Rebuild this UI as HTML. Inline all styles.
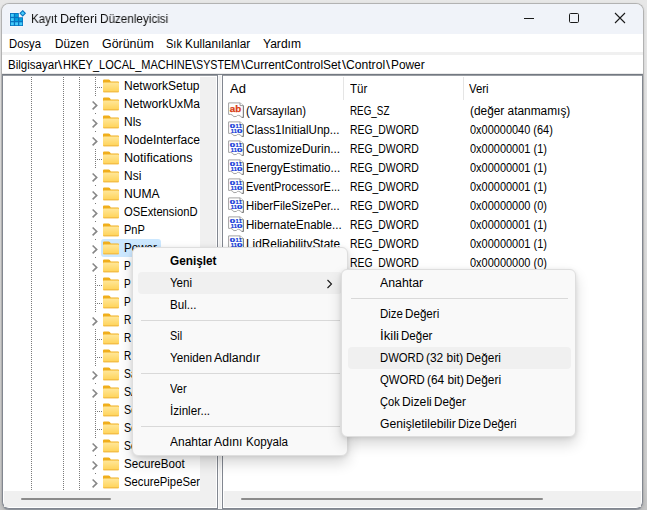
<!DOCTYPE html><html><head><meta charset="utf-8"><title>Kayıt Defteri Düzenleyicisi</title><style>

html,body{margin:0;padding:0;}
body{width:647px;height:510px;overflow:hidden;position:relative;background:#e4e4e4;font-family:"Liberation Sans",sans-serif;font-size:12px;color:#000;}
#shadow{position:absolute;left:0;top:0;width:647px;height:510px;background:linear-gradient(to bottom,#e7e7e7 0,#e6e6e6 40px,#dcdcdc 250px,#cdcdcd 480px,#c4c4c4 510px);}
#win{position:absolute;left:1px;top:3px;width:641px;height:505px;border:1px solid #b2b2b2;border-bottom-color:#8e939a;border-radius:8px;background:linear-gradient(#f0f0f0 0,#f0f0f0 490px,#8a8f98 490px);overflow:hidden;box-shadow:0 1px 3px rgba(0,0,0,.12);}
#in{position:absolute;left:-2px;top:-4px;width:647px;height:510px;}
.abs{position:absolute;}
.t{position:absolute;white-space:nowrap;line-height:14px;height:14px;transform-origin:0 50%;}
.b{font-weight:bold;}
.g{will-change:transform;color:#111;}
#title{left:2px;top:4px;width:641px;height:30px;background:#f0f3f9;}
#menubar{left:2px;top:34px;width:641px;height:18px;background:#fff;}
#addr{left:2px;top:55px;width:641px;height:18px;background:#fff;border-bottom:1px solid #e9e9e9;}
.panel{position:absolute;top:74px;height:435px;background:#fff;border:1px solid #828790;border-top-color:#737981;box-sizing:border-box;}
.panel:after{content:"";position:absolute;left:0;right:0;top:0;height:1px;background:rgba(115,121,129,.72);}
#tree{left:2px;width:216px;border-bottom-left-radius:7px;}
#list{left:222px;width:421px;border-bottom-right-radius:7px;}
.hsb{position:absolute;left:1px;right:1px;bottom:1px;height:16px;background:#f0f0f0;}
#vsb{left:200px;top:77px;width:16px;height:414px;background:#f0f0f0;}
.thumb{height:2px;background:#8b8b8b;border-radius:1px;}
.fd{position:absolute;}
.vd{position:absolute;width:1px;background-image:linear-gradient(to bottom,#7a7a7a 50%,transparent 50%);background-size:1px 2px;}
.hd{position:absolute;height:1px;background-image:linear-gradient(to right,#7a7a7a 50%,transparent 50%);background-size:2px 1px;}
.menu{position:absolute;background:#f9f9f9;border:1px solid #dedede;border-radius:6px;box-sizing:border-box;box-shadow:0 7px 14px rgba(0,0,0,.16),0 1px 4px rgba(0,0,0,.10);}
.hl{position:absolute;background:#f0f0f0;border-radius:4px;}
.sep{position:absolute;height:1px;background:#d9d9d9;}
.colsep{position:absolute;width:1px;background:#e5e5e5;}

</style></head><body><div id="shadow"></div><div id="win"><div id="in">
<div class="abs" id="title"></div><div class="abs" id="menubar"></div><div class="abs" id="addr"></div>
<svg class="abs" style="left:9px;top:9px" width="18" height="18" viewBox="0 0 18 18"><path d="M0.6 3.6H10.2V7.9H14.4V17.4H0.6Z" fill="#fff" opacity=".75"/><path d="M13.7 0.7L17.3 4.3L13.7 7.9L10.1 4.3Z" fill="#fff" opacity=".75"/><path d="M1 4H9.8V8.3H14V17H1Z" fill="#0873bf"/><rect x="1.9" y="4.9" width="2.9" height="2.9" fill="#45ccfb"/><rect x="6.1" y="4.9" width="2.9" height="2.9" fill="#05a2df"/><rect x="1.9" y="9.1" width="2.9" height="2.9" fill="#45ccfb"/><rect x="6.1" y="9.1" width="2.9" height="2.9" fill="#05a2df"/><rect x="10.3" y="9.1" width="2.9" height="2.9" fill="#05a2df"/><rect x="1.9" y="13.3" width="2.9" height="2.9" fill="#45ccfb"/><rect x="6.1" y="13.3" width="2.9" height="2.9" fill="#45ccfb"/><rect x="10.3" y="13.3" width="2.9" height="2.9" fill="#45ccfb"/><path d="M13.7 1.7L16.3 4.3L13.7 6.9L11.1 4.3Z" fill="#45ccfb" stroke="#0873bf" stroke-width="1.1"/></svg>
<svg class="abs" style="left:520px;top:8px" width="115" height="22" viewBox="0 0 115 22" fill="none" stroke="#1a1a1a" stroke-width="1"><path d="M4 10.5H14"/><rect x="49.5" y="5.5" width="9" height="9" rx="1.1"/><path d="M95 5L105 15M105 5L95 15" stroke-width="1.1"/></svg>
<div class="abs" style="left:218px;top:74px;width:4px;height:436px;background:linear-gradient(to right,#fafafa 1px,#f0f0f0 1px,#f0f0f0 3px,#fafafa 3px)"></div><div class="abs" style="left:218px;top:74px;width:4px;height:1px;background:#7f858d"></div><div class="panel" id="tree"><div class="hsb"></div></div><div class="panel" id="list"><div class="hsb"></div></div>
<div class="vd" style="left:31px;top:77px;height:414px"></div>
<div class="vd" style="left:63px;top:77px;height:414px"></div>
<div class="vd" style="left:79px;top:77px;height:414px"></div>
<div class="vd" style="left:95px;top:77px;height:414px"></div>
<div class="hd" style="left:97px;top:87px;width:6px"></div>
<svg class="fd" style="left:103px;top:78.5px" width="16" height="14" viewBox="0 0 16 14"><defs><linearGradient id="fg0" x1="0" y1="0" x2="0" y2="1"><stop offset="0" stop-color="#ffe79a"/><stop offset="1" stop-color="#ffd255"/></linearGradient></defs><path d="M0 1.5Q0 0.5 1 0.5H5.6Q6.3 0.5 6.8 1.1L7.8 2.6H15Q16 2.6 16 3.6V12Q16 13 15 13H1Q0 13 0 12Z" fill="#f0ae1c"/><path d="M0 4.3Q0 3.5 0.8 3.5H15.2Q16 3.5 16 4.3V12.3Q16 13.3 15 13.3H1Q0 13.3 0 12.3Z" fill="url(#fg0)"/><rect x="0.3" y="12.5" width="15.4" height="0.8" rx="0.4" fill="#e9a935"/></svg>
<div class="abs" style="left:91px;top:96px;width:9px;height:17px;background:#fff"></div>
<svg class="abs" style="left:91px;top:100px" width="8" height="11" viewBox="0 0 8 11"><path d="M1.6 1.5L5.7 5.4L1.6 9.3" fill="none" stroke="#878787" stroke-width="1.6"/></svg>
<svg class="fd" style="left:103px;top:96.5px" width="16" height="14" viewBox="0 0 16 14"><defs><linearGradient id="fg1" x1="0" y1="0" x2="0" y2="1"><stop offset="0" stop-color="#ffe79a"/><stop offset="1" stop-color="#ffd255"/></linearGradient></defs><path d="M0 1.5Q0 0.5 1 0.5H5.6Q6.3 0.5 6.8 1.1L7.8 2.6H15Q16 2.6 16 3.6V12Q16 13 15 13H1Q0 13 0 12Z" fill="#f0ae1c"/><path d="M0 4.3Q0 3.5 0.8 3.5H15.2Q16 3.5 16 4.3V12.3Q16 13.3 15 13.3H1Q0 13.3 0 12.3Z" fill="url(#fg1)"/><rect x="0.3" y="12.5" width="15.4" height="0.8" rx="0.4" fill="#e9a935"/></svg>
<div class="abs" style="left:91px;top:114px;width:9px;height:17px;background:#fff"></div>
<svg class="abs" style="left:91px;top:118px" width="8" height="11" viewBox="0 0 8 11"><path d="M1.6 1.5L5.7 5.4L1.6 9.3" fill="none" stroke="#878787" stroke-width="1.6"/></svg>
<svg class="fd" style="left:103px;top:114.5px" width="16" height="14" viewBox="0 0 16 14"><defs><linearGradient id="fg2" x1="0" y1="0" x2="0" y2="1"><stop offset="0" stop-color="#ffe79a"/><stop offset="1" stop-color="#ffd255"/></linearGradient></defs><path d="M0 1.5Q0 0.5 1 0.5H5.6Q6.3 0.5 6.8 1.1L7.8 2.6H15Q16 2.6 16 3.6V12Q16 13 15 13H1Q0 13 0 12Z" fill="#f0ae1c"/><path d="M0 4.3Q0 3.5 0.8 3.5H15.2Q16 3.5 16 4.3V12.3Q16 13.3 15 13.3H1Q0 13.3 0 12.3Z" fill="url(#fg2)"/><rect x="0.3" y="12.5" width="15.4" height="0.8" rx="0.4" fill="#e9a935"/></svg>
<div class="abs" style="left:91px;top:132px;width:9px;height:17px;background:#fff"></div>
<svg class="abs" style="left:91px;top:136px" width="8" height="11" viewBox="0 0 8 11"><path d="M1.6 1.5L5.7 5.4L1.6 9.3" fill="none" stroke="#878787" stroke-width="1.6"/></svg>
<svg class="fd" style="left:103px;top:132.5px" width="16" height="14" viewBox="0 0 16 14"><defs><linearGradient id="fg3" x1="0" y1="0" x2="0" y2="1"><stop offset="0" stop-color="#ffe79a"/><stop offset="1" stop-color="#ffd255"/></linearGradient></defs><path d="M0 1.5Q0 0.5 1 0.5H5.6Q6.3 0.5 6.8 1.1L7.8 2.6H15Q16 2.6 16 3.6V12Q16 13 15 13H1Q0 13 0 12Z" fill="#f0ae1c"/><path d="M0 4.3Q0 3.5 0.8 3.5H15.2Q16 3.5 16 4.3V12.3Q16 13.3 15 13.3H1Q0 13.3 0 12.3Z" fill="url(#fg3)"/><rect x="0.3" y="12.5" width="15.4" height="0.8" rx="0.4" fill="#e9a935"/></svg>
<div class="hd" style="left:97px;top:159px;width:6px"></div>
<svg class="fd" style="left:103px;top:150.5px" width="16" height="14" viewBox="0 0 16 14"><defs><linearGradient id="fg4" x1="0" y1="0" x2="0" y2="1"><stop offset="0" stop-color="#ffe79a"/><stop offset="1" stop-color="#ffd255"/></linearGradient></defs><path d="M0 1.5Q0 0.5 1 0.5H5.6Q6.3 0.5 6.8 1.1L7.8 2.6H15Q16 2.6 16 3.6V12Q16 13 15 13H1Q0 13 0 12Z" fill="#f0ae1c"/><path d="M0 4.3Q0 3.5 0.8 3.5H15.2Q16 3.5 16 4.3V12.3Q16 13.3 15 13.3H1Q0 13.3 0 12.3Z" fill="url(#fg4)"/><rect x="0.3" y="12.5" width="15.4" height="0.8" rx="0.4" fill="#e9a935"/></svg>
<div class="abs" style="left:91px;top:168px;width:9px;height:17px;background:#fff"></div>
<svg class="abs" style="left:91px;top:172px" width="8" height="11" viewBox="0 0 8 11"><path d="M1.6 1.5L5.7 5.4L1.6 9.3" fill="none" stroke="#878787" stroke-width="1.6"/></svg>
<svg class="fd" style="left:103px;top:168.5px" width="16" height="14" viewBox="0 0 16 14"><defs><linearGradient id="fg5" x1="0" y1="0" x2="0" y2="1"><stop offset="0" stop-color="#ffe79a"/><stop offset="1" stop-color="#ffd255"/></linearGradient></defs><path d="M0 1.5Q0 0.5 1 0.5H5.6Q6.3 0.5 6.8 1.1L7.8 2.6H15Q16 2.6 16 3.6V12Q16 13 15 13H1Q0 13 0 12Z" fill="#f0ae1c"/><path d="M0 4.3Q0 3.5 0.8 3.5H15.2Q16 3.5 16 4.3V12.3Q16 13.3 15 13.3H1Q0 13.3 0 12.3Z" fill="url(#fg5)"/><rect x="0.3" y="12.5" width="15.4" height="0.8" rx="0.4" fill="#e9a935"/></svg>
<div class="abs" style="left:91px;top:186px;width:9px;height:17px;background:#fff"></div>
<svg class="abs" style="left:91px;top:190px" width="8" height="11" viewBox="0 0 8 11"><path d="M1.6 1.5L5.7 5.4L1.6 9.3" fill="none" stroke="#878787" stroke-width="1.6"/></svg>
<svg class="fd" style="left:103px;top:186.5px" width="16" height="14" viewBox="0 0 16 14"><defs><linearGradient id="fg6" x1="0" y1="0" x2="0" y2="1"><stop offset="0" stop-color="#ffe79a"/><stop offset="1" stop-color="#ffd255"/></linearGradient></defs><path d="M0 1.5Q0 0.5 1 0.5H5.6Q6.3 0.5 6.8 1.1L7.8 2.6H15Q16 2.6 16 3.6V12Q16 13 15 13H1Q0 13 0 12Z" fill="#f0ae1c"/><path d="M0 4.3Q0 3.5 0.8 3.5H15.2Q16 3.5 16 4.3V12.3Q16 13.3 15 13.3H1Q0 13.3 0 12.3Z" fill="url(#fg6)"/><rect x="0.3" y="12.5" width="15.4" height="0.8" rx="0.4" fill="#e9a935"/></svg>
<div class="abs" style="left:91px;top:204px;width:9px;height:17px;background:#fff"></div>
<svg class="abs" style="left:91px;top:208px" width="8" height="11" viewBox="0 0 8 11"><path d="M1.6 1.5L5.7 5.4L1.6 9.3" fill="none" stroke="#878787" stroke-width="1.6"/></svg>
<svg class="fd" style="left:103px;top:204.5px" width="16" height="14" viewBox="0 0 16 14"><defs><linearGradient id="fg7" x1="0" y1="0" x2="0" y2="1"><stop offset="0" stop-color="#ffe79a"/><stop offset="1" stop-color="#ffd255"/></linearGradient></defs><path d="M0 1.5Q0 0.5 1 0.5H5.6Q6.3 0.5 6.8 1.1L7.8 2.6H15Q16 2.6 16 3.6V12Q16 13 15 13H1Q0 13 0 12Z" fill="#f0ae1c"/><path d="M0 4.3Q0 3.5 0.8 3.5H15.2Q16 3.5 16 4.3V12.3Q16 13.3 15 13.3H1Q0 13.3 0 12.3Z" fill="url(#fg7)"/><rect x="0.3" y="12.5" width="15.4" height="0.8" rx="0.4" fill="#e9a935"/></svg>
<div class="abs" style="left:91px;top:222px;width:9px;height:17px;background:#fff"></div>
<svg class="abs" style="left:91px;top:226px" width="8" height="11" viewBox="0 0 8 11"><path d="M1.6 1.5L5.7 5.4L1.6 9.3" fill="none" stroke="#878787" stroke-width="1.6"/></svg>
<svg class="fd" style="left:103px;top:222.5px" width="16" height="14" viewBox="0 0 16 14"><defs><linearGradient id="fg8" x1="0" y1="0" x2="0" y2="1"><stop offset="0" stop-color="#ffe79a"/><stop offset="1" stop-color="#ffd255"/></linearGradient></defs><path d="M0 1.5Q0 0.5 1 0.5H5.6Q6.3 0.5 6.8 1.1L7.8 2.6H15Q16 2.6 16 3.6V12Q16 13 15 13H1Q0 13 0 12Z" fill="#f0ae1c"/><path d="M0 4.3Q0 3.5 0.8 3.5H15.2Q16 3.5 16 4.3V12.3Q16 13.3 15 13.3H1Q0 13.3 0 12.3Z" fill="url(#fg8)"/><rect x="0.3" y="12.5" width="15.4" height="0.8" rx="0.4" fill="#e9a935"/></svg>
<div class="abs" style="left:101px;top:239px;width:60px;height:18px;background:#cce8ff;border-radius:3px"></div>
<div class="abs" style="left:91px;top:240px;width:9px;height:17px;background:#fff"></div>
<svg class="abs" style="left:91px;top:244px" width="8" height="11" viewBox="0 0 8 11"><path d="M1.6 1.5L5.7 5.4L1.6 9.3" fill="none" stroke="#878787" stroke-width="1.6"/></svg>
<svg class="fd" style="left:103px;top:240.5px" width="16" height="14" viewBox="0 0 16 14"><defs><linearGradient id="fg9" x1="0" y1="0" x2="0" y2="1"><stop offset="0" stop-color="#ffe79a"/><stop offset="1" stop-color="#ffd255"/></linearGradient></defs><path d="M0 1.5Q0 0.5 1 0.5H5.6Q6.3 0.5 6.8 1.1L7.8 2.6H15Q16 2.6 16 3.6V12Q16 13 15 13H1Q0 13 0 12Z" fill="#f0ae1c"/><path d="M0 4.3Q0 3.5 0.8 3.5H15.2Q16 3.5 16 4.3V12.3Q16 13.3 15 13.3H1Q0 13.3 0 12.3Z" fill="url(#fg9)"/><rect x="0.3" y="12.5" width="15.4" height="0.8" rx="0.4" fill="#e9a935"/></svg>
<div class="abs" style="left:91px;top:258px;width:9px;height:17px;background:#fff"></div>
<svg class="abs" style="left:91px;top:262px" width="8" height="11" viewBox="0 0 8 11"><path d="M1.6 1.5L5.7 5.4L1.6 9.3" fill="none" stroke="#878787" stroke-width="1.6"/></svg>
<svg class="fd" style="left:103px;top:258.5px" width="16" height="14" viewBox="0 0 16 14"><defs><linearGradient id="fg10" x1="0" y1="0" x2="0" y2="1"><stop offset="0" stop-color="#ffe79a"/><stop offset="1" stop-color="#ffd255"/></linearGradient></defs><path d="M0 1.5Q0 0.5 1 0.5H5.6Q6.3 0.5 6.8 1.1L7.8 2.6H15Q16 2.6 16 3.6V12Q16 13 15 13H1Q0 13 0 12Z" fill="#f0ae1c"/><path d="M0 4.3Q0 3.5 0.8 3.5H15.2Q16 3.5 16 4.3V12.3Q16 13.3 15 13.3H1Q0 13.3 0 12.3Z" fill="url(#fg10)"/><rect x="0.3" y="12.5" width="15.4" height="0.8" rx="0.4" fill="#e9a935"/></svg>
<div class="hd" style="left:97px;top:285px;width:6px"></div>
<svg class="fd" style="left:103px;top:276.5px" width="16" height="14" viewBox="0 0 16 14"><defs><linearGradient id="fg11" x1="0" y1="0" x2="0" y2="1"><stop offset="0" stop-color="#ffe79a"/><stop offset="1" stop-color="#ffd255"/></linearGradient></defs><path d="M0 1.5Q0 0.5 1 0.5H5.6Q6.3 0.5 6.8 1.1L7.8 2.6H15Q16 2.6 16 3.6V12Q16 13 15 13H1Q0 13 0 12Z" fill="#f0ae1c"/><path d="M0 4.3Q0 3.5 0.8 3.5H15.2Q16 3.5 16 4.3V12.3Q16 13.3 15 13.3H1Q0 13.3 0 12.3Z" fill="url(#fg11)"/><rect x="0.3" y="12.5" width="15.4" height="0.8" rx="0.4" fill="#e9a935"/></svg>
<div class="hd" style="left:97px;top:303px;width:6px"></div>
<svg class="fd" style="left:103px;top:294.5px" width="16" height="14" viewBox="0 0 16 14"><defs><linearGradient id="fg12" x1="0" y1="0" x2="0" y2="1"><stop offset="0" stop-color="#ffe79a"/><stop offset="1" stop-color="#ffd255"/></linearGradient></defs><path d="M0 1.5Q0 0.5 1 0.5H5.6Q6.3 0.5 6.8 1.1L7.8 2.6H15Q16 2.6 16 3.6V12Q16 13 15 13H1Q0 13 0 12Z" fill="#f0ae1c"/><path d="M0 4.3Q0 3.5 0.8 3.5H15.2Q16 3.5 16 4.3V12.3Q16 13.3 15 13.3H1Q0 13.3 0 12.3Z" fill="url(#fg12)"/><rect x="0.3" y="12.5" width="15.4" height="0.8" rx="0.4" fill="#e9a935"/></svg>
<div class="abs" style="left:91px;top:312px;width:9px;height:17px;background:#fff"></div>
<svg class="abs" style="left:91px;top:316px" width="8" height="11" viewBox="0 0 8 11"><path d="M1.6 1.5L5.7 5.4L1.6 9.3" fill="none" stroke="#878787" stroke-width="1.6"/></svg>
<svg class="fd" style="left:103px;top:312.5px" width="16" height="14" viewBox="0 0 16 14"><defs><linearGradient id="fg13" x1="0" y1="0" x2="0" y2="1"><stop offset="0" stop-color="#ffe79a"/><stop offset="1" stop-color="#ffd255"/></linearGradient></defs><path d="M0 1.5Q0 0.5 1 0.5H5.6Q6.3 0.5 6.8 1.1L7.8 2.6H15Q16 2.6 16 3.6V12Q16 13 15 13H1Q0 13 0 12Z" fill="#f0ae1c"/><path d="M0 4.3Q0 3.5 0.8 3.5H15.2Q16 3.5 16 4.3V12.3Q16 13.3 15 13.3H1Q0 13.3 0 12.3Z" fill="url(#fg13)"/><rect x="0.3" y="12.5" width="15.4" height="0.8" rx="0.4" fill="#e9a935"/></svg>
<div class="hd" style="left:97px;top:339px;width:6px"></div>
<svg class="fd" style="left:103px;top:330.5px" width="16" height="14" viewBox="0 0 16 14"><defs><linearGradient id="fg14" x1="0" y1="0" x2="0" y2="1"><stop offset="0" stop-color="#ffe79a"/><stop offset="1" stop-color="#ffd255"/></linearGradient></defs><path d="M0 1.5Q0 0.5 1 0.5H5.6Q6.3 0.5 6.8 1.1L7.8 2.6H15Q16 2.6 16 3.6V12Q16 13 15 13H1Q0 13 0 12Z" fill="#f0ae1c"/><path d="M0 4.3Q0 3.5 0.8 3.5H15.2Q16 3.5 16 4.3V12.3Q16 13.3 15 13.3H1Q0 13.3 0 12.3Z" fill="url(#fg14)"/><rect x="0.3" y="12.5" width="15.4" height="0.8" rx="0.4" fill="#e9a935"/></svg>
<div class="hd" style="left:97px;top:357px;width:6px"></div>
<svg class="fd" style="left:103px;top:348.5px" width="16" height="14" viewBox="0 0 16 14"><defs><linearGradient id="fg15" x1="0" y1="0" x2="0" y2="1"><stop offset="0" stop-color="#ffe79a"/><stop offset="1" stop-color="#ffd255"/></linearGradient></defs><path d="M0 1.5Q0 0.5 1 0.5H5.6Q6.3 0.5 6.8 1.1L7.8 2.6H15Q16 2.6 16 3.6V12Q16 13 15 13H1Q0 13 0 12Z" fill="#f0ae1c"/><path d="M0 4.3Q0 3.5 0.8 3.5H15.2Q16 3.5 16 4.3V12.3Q16 13.3 15 13.3H1Q0 13.3 0 12.3Z" fill="url(#fg15)"/><rect x="0.3" y="12.5" width="15.4" height="0.8" rx="0.4" fill="#e9a935"/></svg>
<div class="abs" style="left:91px;top:366px;width:9px;height:17px;background:#fff"></div>
<svg class="abs" style="left:91px;top:370px" width="8" height="11" viewBox="0 0 8 11"><path d="M1.6 1.5L5.7 5.4L1.6 9.3" fill="none" stroke="#878787" stroke-width="1.6"/></svg>
<svg class="fd" style="left:103px;top:366.5px" width="16" height="14" viewBox="0 0 16 14"><defs><linearGradient id="fg16" x1="0" y1="0" x2="0" y2="1"><stop offset="0" stop-color="#ffe79a"/><stop offset="1" stop-color="#ffd255"/></linearGradient></defs><path d="M0 1.5Q0 0.5 1 0.5H5.6Q6.3 0.5 6.8 1.1L7.8 2.6H15Q16 2.6 16 3.6V12Q16 13 15 13H1Q0 13 0 12Z" fill="#f0ae1c"/><path d="M0 4.3Q0 3.5 0.8 3.5H15.2Q16 3.5 16 4.3V12.3Q16 13.3 15 13.3H1Q0 13.3 0 12.3Z" fill="url(#fg16)"/><rect x="0.3" y="12.5" width="15.4" height="0.8" rx="0.4" fill="#e9a935"/></svg>
<div class="abs" style="left:91px;top:384px;width:9px;height:17px;background:#fff"></div>
<svg class="abs" style="left:91px;top:388px" width="8" height="11" viewBox="0 0 8 11"><path d="M1.6 1.5L5.7 5.4L1.6 9.3" fill="none" stroke="#878787" stroke-width="1.6"/></svg>
<svg class="fd" style="left:103px;top:384.5px" width="16" height="14" viewBox="0 0 16 14"><defs><linearGradient id="fg17" x1="0" y1="0" x2="0" y2="1"><stop offset="0" stop-color="#ffe79a"/><stop offset="1" stop-color="#ffd255"/></linearGradient></defs><path d="M0 1.5Q0 0.5 1 0.5H5.6Q6.3 0.5 6.8 1.1L7.8 2.6H15Q16 2.6 16 3.6V12Q16 13 15 13H1Q0 13 0 12Z" fill="#f0ae1c"/><path d="M0 4.3Q0 3.5 0.8 3.5H15.2Q16 3.5 16 4.3V12.3Q16 13.3 15 13.3H1Q0 13.3 0 12.3Z" fill="url(#fg17)"/><rect x="0.3" y="12.5" width="15.4" height="0.8" rx="0.4" fill="#e9a935"/></svg>
<div class="hd" style="left:97px;top:411px;width:6px"></div>
<svg class="fd" style="left:103px;top:402.5px" width="16" height="14" viewBox="0 0 16 14"><defs><linearGradient id="fg18" x1="0" y1="0" x2="0" y2="1"><stop offset="0" stop-color="#ffe79a"/><stop offset="1" stop-color="#ffd255"/></linearGradient></defs><path d="M0 1.5Q0 0.5 1 0.5H5.6Q6.3 0.5 6.8 1.1L7.8 2.6H15Q16 2.6 16 3.6V12Q16 13 15 13H1Q0 13 0 12Z" fill="#f0ae1c"/><path d="M0 4.3Q0 3.5 0.8 3.5H15.2Q16 3.5 16 4.3V12.3Q16 13.3 15 13.3H1Q0 13.3 0 12.3Z" fill="url(#fg18)"/><rect x="0.3" y="12.5" width="15.4" height="0.8" rx="0.4" fill="#e9a935"/></svg>
<div class="hd" style="left:97px;top:429px;width:6px"></div>
<svg class="fd" style="left:103px;top:420.5px" width="16" height="14" viewBox="0 0 16 14"><defs><linearGradient id="fg19" x1="0" y1="0" x2="0" y2="1"><stop offset="0" stop-color="#ffe79a"/><stop offset="1" stop-color="#ffd255"/></linearGradient></defs><path d="M0 1.5Q0 0.5 1 0.5H5.6Q6.3 0.5 6.8 1.1L7.8 2.6H15Q16 2.6 16 3.6V12Q16 13 15 13H1Q0 13 0 12Z" fill="#f0ae1c"/><path d="M0 4.3Q0 3.5 0.8 3.5H15.2Q16 3.5 16 4.3V12.3Q16 13.3 15 13.3H1Q0 13.3 0 12.3Z" fill="url(#fg19)"/><rect x="0.3" y="12.5" width="15.4" height="0.8" rx="0.4" fill="#e9a935"/></svg>
<div class="abs" style="left:91px;top:438px;width:9px;height:17px;background:#fff"></div>
<svg class="abs" style="left:91px;top:442px" width="8" height="11" viewBox="0 0 8 11"><path d="M1.6 1.5L5.7 5.4L1.6 9.3" fill="none" stroke="#878787" stroke-width="1.6"/></svg>
<svg class="fd" style="left:103px;top:438.5px" width="16" height="14" viewBox="0 0 16 14"><defs><linearGradient id="fg20" x1="0" y1="0" x2="0" y2="1"><stop offset="0" stop-color="#ffe79a"/><stop offset="1" stop-color="#ffd255"/></linearGradient></defs><path d="M0 1.5Q0 0.5 1 0.5H5.6Q6.3 0.5 6.8 1.1L7.8 2.6H15Q16 2.6 16 3.6V12Q16 13 15 13H1Q0 13 0 12Z" fill="#f0ae1c"/><path d="M0 4.3Q0 3.5 0.8 3.5H15.2Q16 3.5 16 4.3V12.3Q16 13.3 15 13.3H1Q0 13.3 0 12.3Z" fill="url(#fg20)"/><rect x="0.3" y="12.5" width="15.4" height="0.8" rx="0.4" fill="#e9a935"/></svg>
<div class="abs" style="left:91px;top:456px;width:9px;height:17px;background:#fff"></div>
<svg class="abs" style="left:91px;top:460px" width="8" height="11" viewBox="0 0 8 11"><path d="M1.6 1.5L5.7 5.4L1.6 9.3" fill="none" stroke="#878787" stroke-width="1.6"/></svg>
<svg class="fd" style="left:103px;top:456.5px" width="16" height="14" viewBox="0 0 16 14"><defs><linearGradient id="fg21" x1="0" y1="0" x2="0" y2="1"><stop offset="0" stop-color="#ffe79a"/><stop offset="1" stop-color="#ffd255"/></linearGradient></defs><path d="M0 1.5Q0 0.5 1 0.5H5.6Q6.3 0.5 6.8 1.1L7.8 2.6H15Q16 2.6 16 3.6V12Q16 13 15 13H1Q0 13 0 12Z" fill="#f0ae1c"/><path d="M0 4.3Q0 3.5 0.8 3.5H15.2Q16 3.5 16 4.3V12.3Q16 13.3 15 13.3H1Q0 13.3 0 12.3Z" fill="url(#fg21)"/><rect x="0.3" y="12.5" width="15.4" height="0.8" rx="0.4" fill="#e9a935"/></svg>
<div class="abs" style="left:91px;top:474px;width:9px;height:17px;background:#fff"></div>
<svg class="abs" style="left:91px;top:478px" width="8" height="11" viewBox="0 0 8 11"><path d="M1.6 1.5L5.7 5.4L1.6 9.3" fill="none" stroke="#878787" stroke-width="1.6"/></svg>
<svg class="fd" style="left:103px;top:474.5px" width="16" height="14" viewBox="0 0 16 14"><defs><linearGradient id="fg22" x1="0" y1="0" x2="0" y2="1"><stop offset="0" stop-color="#ffe79a"/><stop offset="1" stop-color="#ffd255"/></linearGradient></defs><path d="M0 1.5Q0 0.5 1 0.5H5.6Q6.3 0.5 6.8 1.1L7.8 2.6H15Q16 2.6 16 3.6V12Q16 13 15 13H1Q0 13 0 12Z" fill="#f0ae1c"/><path d="M0 4.3Q0 3.5 0.8 3.5H15.2Q16 3.5 16 4.3V12.3Q16 13.3 15 13.3H1Q0 13.3 0 12.3Z" fill="url(#fg22)"/><rect x="0.3" y="12.5" width="15.4" height="0.8" rx="0.4" fill="#e9a935"/></svg>
<span class="t g" id="t0" style="left:30.80px;top:11.70px;transform:scaleX(0.9576);">Kayıt</span>
<span class="t g" id="t1" style="left:60.10px;top:11.70px;transform:scaleX(1.0497);">Defteri</span>
<span class="t g" id="t2" style="left:99.50px;top:11.70px;transform:scaleX(0.9753);">Düzenleyicisi</span>
<span class="t" id="t3" style="left:8.90px;top:37.00px;transform:scaleX(0.9378);">Dosya</span>
<span class="t" id="t4" style="left:54.60px;top:37.00px;transform:scaleX(0.9773);">Düzen</span>
<span class="t" id="t5" style="left:101.50px;top:37.00px;transform:scaleX(1.0354);">Görünüm</span>
<span class="t" id="t6" style="left:166.30px;top:37.00px;transform:scaleX(0.9168);">Sık</span>
<span class="t" id="t7" style="left:185.20px;top:37.00px;transform:scaleX(0.9887);">Kullanılanlar</span>
<span class="t" id="t8" style="left:263.10px;top:37.00px;transform:scaleX(1.0054);">Yardım</span>
<span class="t" id="t9" style="left:7.60px;top:57.80px;transform:scaleX(0.9610);">Bilgisayar</span>
<span class="t" id="t10" style="left:57.99px;top:57.80px;transform:scaleX(1.2000);">\</span>
<span class="t" id="t11" style="left:62.80px;top:57.80px;transform:scaleX(0.9167);">HKEY_LOCAL_MACHINE</span>
<span class="t" id="t12" style="left:192.09px;top:57.80px;transform:scaleX(1.2000);">\</span>
<span class="t" id="t13" style="left:196.10px;top:57.80px;transform:scaleX(0.8917);">SYSTEM</span>
<span class="t" id="t14" style="left:240.79px;top:57.80px;transform:scaleX(1.2000);">\</span>
<span class="t" id="t15" style="left:245.40px;top:57.80px;transform:scaleX(0.9915);">CurrentControlSet</span>
<span class="t" id="t16" style="left:341.74px;top:57.80px;transform:scaleX(1.2000);">\</span>
<span class="t" id="t17" style="left:346.10px;top:57.80px;transform:scaleX(1.0107);">Control</span>
<span class="t" id="t18" style="left:386.09px;top:57.80px;transform:scaleX(1.2000);">\</span>
<span class="t" id="t19" style="left:390.90px;top:57.80px;transform:scaleX(0.9878);">Power</span>
<span class="t" id="t20" style="left:229.60px;top:82.00px;transform:scaleX(1.0826);">Ad</span>
<span class="t" id="t21" style="left:349.90px;top:82.00px;transform:scaleX(0.9611);">Tür</span>
<span class="t" id="t22" style="left:469.40px;top:82.00px;transform:scaleX(0.9474);">Veri</span>
<span class="t" id="t23" style="left:245.90px;top:104.00px;transform:scaleX(0.9389);">(Varsayılan)</span>
<span class="t" id="t24" style="left:349.90px;top:104.00px;transform:scaleX(0.8206);">REG_SZ</span>
<span class="t" id="t25" style="left:470.00px;top:104.00px;transform:scaleX(0.9894);">(değer atanmamış)</span>
<span class="t" id="t26" style="left:245.90px;top:123.00px;transform:scaleX(0.9667);">Class1InitialUnp...</span>
<span class="t" id="t27" style="left:349.90px;top:123.00px;transform:scaleX(0.8671);">REG_DWORD</span>
<span class="t" id="t28" style="left:470.00px;top:123.00px;transform:scaleX(0.9124);">0x00000040 (64)</span>
<span class="t" id="t29" style="left:245.90px;top:142.00px;transform:scaleX(0.9866);">CustomizeDurin...</span>
<span class="t" id="t30" style="left:349.90px;top:142.00px;transform:scaleX(0.8671);">REG_DWORD</span>
<span class="t" id="t31" style="left:470.00px;top:142.00px;transform:scaleX(0.9146);">0x00000001 (1)</span>
<span class="t" id="t32" style="left:245.90px;top:161.00px;transform:scaleX(0.9664);">EnergyEstimatio...</span>
<span class="t" id="t33" style="left:349.90px;top:161.00px;transform:scaleX(0.8671);">REG_DWORD</span>
<span class="t" id="t34" style="left:470.00px;top:161.00px;transform:scaleX(0.9146);">0x00000001 (1)</span>
<span class="t" id="t35" style="left:245.90px;top:180.00px;transform:scaleX(0.9161);">EventProcessorE...</span>
<span class="t" id="t36" style="left:349.90px;top:180.00px;transform:scaleX(0.8671);">REG_DWORD</span>
<span class="t" id="t37" style="left:470.00px;top:180.00px;transform:scaleX(0.9146);">0x00000001 (1)</span>
<span class="t" id="t38" style="left:245.90px;top:199.00px;transform:scaleX(0.9419);">HiberFileSizePer...</span>
<span class="t" id="t39" style="left:349.90px;top:199.00px;transform:scaleX(0.8671);">REG_DWORD</span>
<span class="t" id="t40" style="left:470.00px;top:199.00px;transform:scaleX(0.9146);">0x00000000 (0)</span>
<span class="t" id="t41" style="left:245.90px;top:218.00px;transform:scaleX(0.9617);">HibernateEnable...</span>
<span class="t" id="t42" style="left:349.90px;top:218.00px;transform:scaleX(0.8671);">REG_DWORD</span>
<span class="t" id="t43" style="left:470.00px;top:218.00px;transform:scaleX(0.9146);">0x00000001 (1)</span>
<span class="t" id="t44" style="left:245.90px;top:237.00px;transform:scaleX(0.9865);">LidReliabilityState</span>
<span class="t" id="t45" style="left:349.90px;top:237.00px;transform:scaleX(0.8671);">REG_DWORD</span>
<span class="t" id="t46" style="left:470.00px;top:237.00px;transform:scaleX(0.9146);">0x00000001 (1)</span>
<span class="t" id="t47" style="left:349.90px;top:256.00px;transform:scaleX(0.8671);">REG_DWORD</span>
<span class="t" id="t48" style="left:470.00px;top:256.00px;transform:scaleX(0.9146);">0x00000000 (0)</span>
<span class="t" id="t49" style="left:123.80px;top:79.00px;transform:scaleX(1.0017);">NetworkSetup</span>
<span class="t" id="t50" style="left:123.80px;top:97.00px;transform:scaleX(1.0085);">NetworkUxMa</span>
<span class="t" id="t51" style="left:123.80px;top:115.00px;transform:scaleX(0.9975);">Nls</span>
<span class="t" id="t52" style="left:123.80px;top:133.00px;transform:scaleX(1.0081);">NodeInterface</span>
<span class="t" id="t53" style="left:123.80px;top:151.00px;transform:scaleX(1.0493);">Notifications</span>
<span class="t" id="t54" style="left:123.80px;top:169.00px;transform:scaleX(0.9975);">Nsi</span>
<span class="t" id="t55" style="left:123.80px;top:187.00px;transform:scaleX(1.0101);">NUMA</span>
<span class="t" id="t56" style="left:123.80px;top:205.00px;transform:scaleX(0.9339);">OSExtensionD</span>
<span class="t" id="t57" style="left:123.80px;top:223.00px;transform:scaleX(0.9212);">PnP</span>
<span class="t" id="t58" style="left:123.80px;top:241.00px;transform:scaleX(0.9672);">Power</span>
<span class="t" id="t59" style="left:123.80px;top:259.00px;transform:scaleX(0.8359);">P</span>
<span class="t" id="t60" style="left:123.80px;top:277.00px;transform:scaleX(0.8359);">P</span>
<span class="t" id="t61" style="left:123.80px;top:295.00px;transform:scaleX(0.8359);">P</span>
<span class="t" id="t62" style="left:123.80px;top:313.00px;transform:scaleX(0.8303);">R</span>
<span class="t" id="t63" style="left:123.80px;top:331.00px;transform:scaleX(0.8303);">R</span>
<span class="t" id="t64" style="left:123.80px;top:349.00px;transform:scaleX(0.8303);">R</span>
<span class="t" id="t65" style="left:123.80px;top:367.00px;transform:scaleX(0.8647);">Sa</span>
<span class="t" id="t66" style="left:123.80px;top:385.00px;transform:scaleX(0.8866);">SA</span>
<span class="t" id="t67" style="left:123.80px;top:403.00px;transform:scaleX(0.8919);">Sc</span>
<span class="t" id="t68" style="left:123.80px;top:421.00px;transform:scaleX(0.8919);">Sc</span>
<span class="t" id="t69" style="left:123.80px;top:439.00px;transform:scaleX(0.8647);">Se</span>
<span class="t" id="t70" style="left:123.80px;top:457.00px;transform:scaleX(0.9678);">SecureBoot</span>
<span class="t" id="t71" style="left:123.80px;top:475.00px;transform:scaleX(0.9415);">SecurePipeSer</span>
<div class="abs" id="vsb"></div>
<div class="colsep" style="left:343px;top:77px;height:23px"></div><div class="colsep" style="left:463px;top:77px;height:23px"></div>
<svg class="abs" style="left:228px;top:102px" width="17" height="17" viewBox="0 0 17 17"><path d="M0.6 0.9H12L15.4 3.6V15.4H13.6Q12.6 13.4 10.6 13.4H9.6Q8.8 14.6 7 14.6H5.6Q4.6 12.4 2.6 12.4H0.6Z" fill="#fff" stroke="#a4a4a4" stroke-width="1" stroke-linejoin="round"/><path d="M15.4 3.8V15.4H13.8" fill="none" stroke="#7e7e7e" stroke-width="1"/><path d="M12 0.9V3.6H15.4" fill="#fff" stroke="#8e8e8e" stroke-width="0.9"/><text x="7.5" y="9.8" font-family="Liberation Sans, sans-serif" font-weight="bold" font-size="9.7" fill="#d83b12" stroke="#d83b12" stroke-width="0.25" text-anchor="middle" textLength="11.4" lengthAdjust="spacingAndGlyphs">ab</text></svg>
<svg class="abs" style="left:228px;top:121px" width="17" height="17" viewBox="0 0 17 17"><path d="M0.6 0.9H12L15.4 3.6V15.4H13.6Q12.6 13.4 10.6 13.4H9.6Q8.8 14.6 7 14.6H5.6Q4.6 12.4 2.6 12.4H0.6Z" fill="#fff" stroke="#a4a4a4" stroke-width="1" stroke-linejoin="round"/><path d="M15.4 3.8V15.4H13.8" fill="none" stroke="#7e7e7e" stroke-width="1"/><path d="M12 0.9V3.6H15.4" fill="#fff" stroke="#8e8e8e" stroke-width="0.9"/><text transform="translate(1.7 6.7) scale(1.22 0.68)" font-family="Liberation Sans, sans-serif" font-weight="bold" font-size="8" fill="#1038d8" stroke="#1038d8" stroke-width="0.3">0</text><text transform="translate(7.6 6.7) scale(0.72 0.68)" font-family="Liberation Sans, sans-serif" font-weight="bold" font-size="8" fill="#1038d8" stroke="#1038d8" stroke-width="0.3" x="0 4.3">11</text><text transform="translate(2.7 11.8) scale(0.72 0.68)" font-family="Liberation Sans, sans-serif" font-weight="bold" font-size="8" fill="#1038d8" stroke="#1038d8" stroke-width="0.3" x="0 4.1">11</text><text transform="translate(8.9 11.8) scale(1.22 0.68)" font-family="Liberation Sans, sans-serif" font-weight="bold" font-size="8" fill="#1038d8" stroke="#1038d8" stroke-width="0.3">0</text></svg>
<svg class="abs" style="left:228px;top:140px" width="17" height="17" viewBox="0 0 17 17"><path d="M0.6 0.9H12L15.4 3.6V15.4H13.6Q12.6 13.4 10.6 13.4H9.6Q8.8 14.6 7 14.6H5.6Q4.6 12.4 2.6 12.4H0.6Z" fill="#fff" stroke="#a4a4a4" stroke-width="1" stroke-linejoin="round"/><path d="M15.4 3.8V15.4H13.8" fill="none" stroke="#7e7e7e" stroke-width="1"/><path d="M12 0.9V3.6H15.4" fill="#fff" stroke="#8e8e8e" stroke-width="0.9"/><text transform="translate(1.7 6.7) scale(1.22 0.68)" font-family="Liberation Sans, sans-serif" font-weight="bold" font-size="8" fill="#1038d8" stroke="#1038d8" stroke-width="0.3">0</text><text transform="translate(7.6 6.7) scale(0.72 0.68)" font-family="Liberation Sans, sans-serif" font-weight="bold" font-size="8" fill="#1038d8" stroke="#1038d8" stroke-width="0.3" x="0 4.3">11</text><text transform="translate(2.7 11.8) scale(0.72 0.68)" font-family="Liberation Sans, sans-serif" font-weight="bold" font-size="8" fill="#1038d8" stroke="#1038d8" stroke-width="0.3" x="0 4.1">11</text><text transform="translate(8.9 11.8) scale(1.22 0.68)" font-family="Liberation Sans, sans-serif" font-weight="bold" font-size="8" fill="#1038d8" stroke="#1038d8" stroke-width="0.3">0</text></svg>
<svg class="abs" style="left:228px;top:159px" width="17" height="17" viewBox="0 0 17 17"><path d="M0.6 0.9H12L15.4 3.6V15.4H13.6Q12.6 13.4 10.6 13.4H9.6Q8.8 14.6 7 14.6H5.6Q4.6 12.4 2.6 12.4H0.6Z" fill="#fff" stroke="#a4a4a4" stroke-width="1" stroke-linejoin="round"/><path d="M15.4 3.8V15.4H13.8" fill="none" stroke="#7e7e7e" stroke-width="1"/><path d="M12 0.9V3.6H15.4" fill="#fff" stroke="#8e8e8e" stroke-width="0.9"/><text transform="translate(1.7 6.7) scale(1.22 0.68)" font-family="Liberation Sans, sans-serif" font-weight="bold" font-size="8" fill="#1038d8" stroke="#1038d8" stroke-width="0.3">0</text><text transform="translate(7.6 6.7) scale(0.72 0.68)" font-family="Liberation Sans, sans-serif" font-weight="bold" font-size="8" fill="#1038d8" stroke="#1038d8" stroke-width="0.3" x="0 4.3">11</text><text transform="translate(2.7 11.8) scale(0.72 0.68)" font-family="Liberation Sans, sans-serif" font-weight="bold" font-size="8" fill="#1038d8" stroke="#1038d8" stroke-width="0.3" x="0 4.1">11</text><text transform="translate(8.9 11.8) scale(1.22 0.68)" font-family="Liberation Sans, sans-serif" font-weight="bold" font-size="8" fill="#1038d8" stroke="#1038d8" stroke-width="0.3">0</text></svg>
<svg class="abs" style="left:228px;top:178px" width="17" height="17" viewBox="0 0 17 17"><path d="M0.6 0.9H12L15.4 3.6V15.4H13.6Q12.6 13.4 10.6 13.4H9.6Q8.8 14.6 7 14.6H5.6Q4.6 12.4 2.6 12.4H0.6Z" fill="#fff" stroke="#a4a4a4" stroke-width="1" stroke-linejoin="round"/><path d="M15.4 3.8V15.4H13.8" fill="none" stroke="#7e7e7e" stroke-width="1"/><path d="M12 0.9V3.6H15.4" fill="#fff" stroke="#8e8e8e" stroke-width="0.9"/><text transform="translate(1.7 6.7) scale(1.22 0.68)" font-family="Liberation Sans, sans-serif" font-weight="bold" font-size="8" fill="#1038d8" stroke="#1038d8" stroke-width="0.3">0</text><text transform="translate(7.6 6.7) scale(0.72 0.68)" font-family="Liberation Sans, sans-serif" font-weight="bold" font-size="8" fill="#1038d8" stroke="#1038d8" stroke-width="0.3" x="0 4.3">11</text><text transform="translate(2.7 11.8) scale(0.72 0.68)" font-family="Liberation Sans, sans-serif" font-weight="bold" font-size="8" fill="#1038d8" stroke="#1038d8" stroke-width="0.3" x="0 4.1">11</text><text transform="translate(8.9 11.8) scale(1.22 0.68)" font-family="Liberation Sans, sans-serif" font-weight="bold" font-size="8" fill="#1038d8" stroke="#1038d8" stroke-width="0.3">0</text></svg>
<svg class="abs" style="left:228px;top:197px" width="17" height="17" viewBox="0 0 17 17"><path d="M0.6 0.9H12L15.4 3.6V15.4H13.6Q12.6 13.4 10.6 13.4H9.6Q8.8 14.6 7 14.6H5.6Q4.6 12.4 2.6 12.4H0.6Z" fill="#fff" stroke="#a4a4a4" stroke-width="1" stroke-linejoin="round"/><path d="M15.4 3.8V15.4H13.8" fill="none" stroke="#7e7e7e" stroke-width="1"/><path d="M12 0.9V3.6H15.4" fill="#fff" stroke="#8e8e8e" stroke-width="0.9"/><text transform="translate(1.7 6.7) scale(1.22 0.68)" font-family="Liberation Sans, sans-serif" font-weight="bold" font-size="8" fill="#1038d8" stroke="#1038d8" stroke-width="0.3">0</text><text transform="translate(7.6 6.7) scale(0.72 0.68)" font-family="Liberation Sans, sans-serif" font-weight="bold" font-size="8" fill="#1038d8" stroke="#1038d8" stroke-width="0.3" x="0 4.3">11</text><text transform="translate(2.7 11.8) scale(0.72 0.68)" font-family="Liberation Sans, sans-serif" font-weight="bold" font-size="8" fill="#1038d8" stroke="#1038d8" stroke-width="0.3" x="0 4.1">11</text><text transform="translate(8.9 11.8) scale(1.22 0.68)" font-family="Liberation Sans, sans-serif" font-weight="bold" font-size="8" fill="#1038d8" stroke="#1038d8" stroke-width="0.3">0</text></svg>
<svg class="abs" style="left:228px;top:216px" width="17" height="17" viewBox="0 0 17 17"><path d="M0.6 0.9H12L15.4 3.6V15.4H13.6Q12.6 13.4 10.6 13.4H9.6Q8.8 14.6 7 14.6H5.6Q4.6 12.4 2.6 12.4H0.6Z" fill="#fff" stroke="#a4a4a4" stroke-width="1" stroke-linejoin="round"/><path d="M15.4 3.8V15.4H13.8" fill="none" stroke="#7e7e7e" stroke-width="1"/><path d="M12 0.9V3.6H15.4" fill="#fff" stroke="#8e8e8e" stroke-width="0.9"/><text transform="translate(1.7 6.7) scale(1.22 0.68)" font-family="Liberation Sans, sans-serif" font-weight="bold" font-size="8" fill="#1038d8" stroke="#1038d8" stroke-width="0.3">0</text><text transform="translate(7.6 6.7) scale(0.72 0.68)" font-family="Liberation Sans, sans-serif" font-weight="bold" font-size="8" fill="#1038d8" stroke="#1038d8" stroke-width="0.3" x="0 4.3">11</text><text transform="translate(2.7 11.8) scale(0.72 0.68)" font-family="Liberation Sans, sans-serif" font-weight="bold" font-size="8" fill="#1038d8" stroke="#1038d8" stroke-width="0.3" x="0 4.1">11</text><text transform="translate(8.9 11.8) scale(1.22 0.68)" font-family="Liberation Sans, sans-serif" font-weight="bold" font-size="8" fill="#1038d8" stroke="#1038d8" stroke-width="0.3">0</text></svg>
<svg class="abs" style="left:228px;top:235px" width="17" height="17" viewBox="0 0 17 17"><path d="M0.6 0.9H12L15.4 3.6V15.4H13.6Q12.6 13.4 10.6 13.4H9.6Q8.8 14.6 7 14.6H5.6Q4.6 12.4 2.6 12.4H0.6Z" fill="#fff" stroke="#a4a4a4" stroke-width="1" stroke-linejoin="round"/><path d="M15.4 3.8V15.4H13.8" fill="none" stroke="#7e7e7e" stroke-width="1"/><path d="M12 0.9V3.6H15.4" fill="#fff" stroke="#8e8e8e" stroke-width="0.9"/><text transform="translate(1.7 6.7) scale(1.22 0.68)" font-family="Liberation Sans, sans-serif" font-weight="bold" font-size="8" fill="#1038d8" stroke="#1038d8" stroke-width="0.3">0</text><text transform="translate(7.6 6.7) scale(0.72 0.68)" font-family="Liberation Sans, sans-serif" font-weight="bold" font-size="8" fill="#1038d8" stroke="#1038d8" stroke-width="0.3" x="0 4.3">11</text><text transform="translate(2.7 11.8) scale(0.72 0.68)" font-family="Liberation Sans, sans-serif" font-weight="bold" font-size="8" fill="#1038d8" stroke="#1038d8" stroke-width="0.3" x="0 4.1">11</text><text transform="translate(8.9 11.8) scale(1.22 0.68)" font-family="Liberation Sans, sans-serif" font-weight="bold" font-size="8" fill="#1038d8" stroke="#1038d8" stroke-width="0.3">0</text></svg>
<svg class="abs" style="left:228px;top:254px" width="17" height="17" viewBox="0 0 17 17"><path d="M0.6 0.9H12L15.4 3.6V15.4H13.6Q12.6 13.4 10.6 13.4H9.6Q8.8 14.6 7 14.6H5.6Q4.6 12.4 2.6 12.4H0.6Z" fill="#fff" stroke="#a4a4a4" stroke-width="1" stroke-linejoin="round"/><path d="M15.4 3.8V15.4H13.8" fill="none" stroke="#7e7e7e" stroke-width="1"/><path d="M12 0.9V3.6H15.4" fill="#fff" stroke="#8e8e8e" stroke-width="0.9"/><text transform="translate(1.7 6.7) scale(1.22 0.68)" font-family="Liberation Sans, sans-serif" font-weight="bold" font-size="8" fill="#1038d8" stroke="#1038d8" stroke-width="0.3">0</text><text transform="translate(7.6 6.7) scale(0.72 0.68)" font-family="Liberation Sans, sans-serif" font-weight="bold" font-size="8" fill="#1038d8" stroke="#1038d8" stroke-width="0.3" x="0 4.3">11</text><text transform="translate(2.7 11.8) scale(0.72 0.68)" font-family="Liberation Sans, sans-serif" font-weight="bold" font-size="8" fill="#1038d8" stroke="#1038d8" stroke-width="0.3" x="0 4.1">11</text><text transform="translate(8.9 11.8) scale(1.22 0.68)" font-family="Liberation Sans, sans-serif" font-weight="bold" font-size="8" fill="#1038d8" stroke="#1038d8" stroke-width="0.3">0</text></svg>
<div class="abs thumb" style="left:21px;top:498px;width:90px"></div><div class="abs thumb" style="left:241px;top:498px;width:302px"></div>
<div class="menu" style="left:132px;top:246.5px;width:216px;height:209px"></div>
<div class="hl" style="left:138px;top:272px;width:204px;height:22px"></div>
<svg class="abs" style="left:326px;top:279px" width="7" height="10" viewBox="0 0 7 10"><path d="M1.5 1L5.5 5L1.5 9" fill="none" stroke="#1a1a1a" stroke-width="1.1"/></svg>
<div class="sep" style="left:141px;top:320px;width:199px"></div>
<div class="sep" style="left:141px;top:373px;width:199px"></div>
<div class="sep" style="left:141px;top:426px;width:199px"></div>
<div class="menu" style="left:341px;top:269px;width:235px;height:168px"></div>
<div class="hl" style="left:348px;top:347px;width:223px;height:22px"></div>
<div class="sep" style="left:351px;top:298px;width:217px"></div>
<span class="t b" id="t72" style="left:169.80px;top:253.80px;transform:scaleX(0.9819);">Genişlet</span>
<span class="t" id="t73" style="left:169.80px;top:275.80px;transform:scaleX(0.9598);">Yeni</span>
<span class="t" id="t74" style="left:169.80px;top:297.70px;transform:scaleX(0.9649);">Bul...</span>
<span class="t" id="t75" style="left:169.80px;top:329.20px;transform:scaleX(0.9068);">Sil</span>
<span class="t" id="t76" style="left:169.80px;top:351.10px;transform:scaleX(0.9758);">Yeniden</span>
<span class="t" id="t77" style="left:214.40px;top:351.10px;transform:scaleX(1.0290);">Adlandır</span>
<span class="t" id="t78" style="left:169.80px;top:381.50px;transform:scaleX(0.9214);">Ver</span>
<span class="t" id="t79" style="left:169.80px;top:403.80px;transform:scaleX(0.9696);">İzinler...</span>
<span class="t" id="t80" style="left:169.80px;top:435.00px;transform:scaleX(0.9969);">Anahtar</span>
<span class="t" id="t81" style="left:214.40px;top:435.00px;transform:scaleX(1.0167);">Adını</span>
<span class="t" id="t82" style="left:245.80px;top:435.00px;transform:scaleX(0.9683);">Kopyala</span>
<span class="t" id="t83" style="left:379.50px;top:275.80px;transform:scaleX(1.0278);">Anahtar</span>
<span class="t" id="t84" style="left:379.50px;top:307.00px;transform:scaleX(0.9577);">Dize</span>
<span class="t" id="t85" style="left:405.00px;top:307.00px;transform:scaleX(0.9700);">Değeri</span>
<span class="t" id="t86" style="left:379.50px;top:329.00px;transform:scaleX(1.0955);">İkili</span>
<span class="t" id="t87" style="left:401.00px;top:329.00px;transform:scaleX(0.9606);">Değer</span>
<span class="t" id="t88" style="left:379.50px;top:351.00px;transform:scaleX(0.9385);">DWORD</span>
<span class="t" id="t89" style="left:425.80px;top:351.00px;transform:scaleX(0.9957);">(32 bit)</span>
<span class="t" id="t90" style="left:465.50px;top:351.00px;transform:scaleX(0.9898);">Değeri</span>
<span class="t" id="t91" style="left:379.50px;top:373.00px;transform:scaleX(0.9466);">QWORD</span>
<span class="t" id="t92" style="left:426.80px;top:373.00px;transform:scaleX(0.9904);">(64 bit)</span>
<span class="t" id="t93" style="left:466.30px;top:373.00px;transform:scaleX(0.9927);">Değeri</span>
<span class="t" id="t94" style="left:379.50px;top:395.00px;transform:scaleX(0.9277);">Çok</span>
<span class="t" id="t95" style="left:401.50px;top:395.00px;transform:scaleX(1.0155);">Dizeli</span>
<span class="t" id="t96" style="left:434.30px;top:395.00px;transform:scaleX(0.9728);">Değer</span>
<span class="t" id="t97" style="left:379.50px;top:417.00px;transform:scaleX(1.0133);">Genişletilebilir</span>
<span class="t" id="t98" style="left:457.70px;top:417.00px;transform:scaleX(0.9494);">Dize</span>
<span class="t" id="t99" style="left:483.00px;top:417.00px;transform:scaleX(0.9474);">Değeri</span>
</div></div></body></html>
